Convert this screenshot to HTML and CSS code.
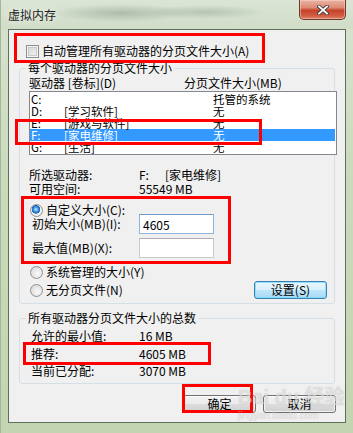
FILE: index.html
```html
<!DOCTYPE html>
<html lang="zh-CN">
<head>
  <meta charset="UTF-8">
  <meta name="viewport" content="width=device-width, initial-scale=1.0">
  <title>虚拟内存</title>
  <link rel="stylesheet" href="styles.css">
</head>
<body>

  <div class="window">
    <div class="titlebar">
      <span class="title">虚拟内存</span>
      <span class="close-btn">
        <svg width="12" height="10" viewBox="0 0 12 10">
          <path d="M2 1.5 L10 8.5 M10 1.5 L2 8.5" stroke="#3b3b3b" stroke-width="3.6" stroke-linecap="square"/>
          <path d="M2 1.5 L10 8.5 M10 1.5 L2 8.5" stroke="#ffffff" stroke-width="1.8" stroke-linecap="square"/>
        </svg>
      </span>
    </div>

    <div class="client">
      <div class="check-row">
        <span class="checkbox"></span>
        <span>自动管理所有驱动器的分页文件大小(A)</span>
      </div>

      <fieldset class="group">
        <legend>每个驱动器的分页文件大小</legend>
        <div class="group-body drives">
          <div class="list-head">
            <span class="head-drive">驱动器 [卷标](D)</span>
            <span>分页文件大小(MB)</span>
          </div>

          <div class="listbox">
            <div class="row"><span class="drive">C:</span><span class="vol"></span><span>托管的系统</span></div>
            <div class="row"><span class="drive">D:</span><span class="vol">[学习软件]</span><span>无</span></div>
            <div class="row"><span class="drive">E:</span><span class="vol">[游戏与软件]</span><span>无</span></div>
            <div class="row selected"><span class="drive">F:</span><span class="vol">[家电维修]</span><span>无</span></div>
            <div class="row"><span class="drive">G:</span><span class="vol">[生活]</span><span>无</span></div>
          </div>

          <div class="info">
            <div class="pair"><span class="key">所选驱动器:</span><span class="letter">F:</span><span>[家电维修]</span></div>
            <div class="pair"><span class="key">可用空间:</span><span>55549 MB</span></div>
          </div>

          <div class="radio-row custom"><span class="radio checked"></span>自定义大小(C):</div>
          <div class="field first">
            <label for="initSize">初始大小(MB)(I):</label>
            <input type="text" id="initSize" class="focused" value="4605">
          </div>
          <div class="field second">
            <label for="maxSize">最大值(MB)(X):</label>
            <input type="text" id="maxSize" value="">
          </div>
          <div class="radio-row system"><span class="radio"></span>系统管理的大小(Y)</div>
          <div class="last-row">
            <div class="radio-row"><span class="radio"></span>无分页文件(N)</div>
            <button type="button" class="btn btn-set">设置(S)</button>
          </div>
        </div>
      </fieldset>

      <fieldset class="group totals">
        <legend>所有驱动器分页文件大小的总数</legend>
        <div class="group-body">
          <div class="pair"><span class="key">允许的最小值:</span><span>16 MB</span></div>
          <div class="pair rec"><span class="key">推荐:</span><span>4605 MB</span></div>
          <div class="pair cur"><span class="key">当前已分配:</span><span>3070 MB</span></div>
        </div>
      </fieldset>

      <div class="buttons">
        <button type="button" class="btn">确定</button>
        <button type="button" class="btn">取消</button>
      </div>
    </div>

    <!-- red annotation boxes -->
    <div class="mark mark-1"></div>
    <div class="mark mark-2"></div>
    <div class="mark mark-3"></div>
    <div class="mark mark-4"></div>
    <div class="mark mark-5"></div>

    <div class="watermark">
      <span class="wm-big">Bai du 经验</span>
      <span class="wm-small">jingyan.baidu.com</span>
    </div>
  </div>

</body>
</html>
```

FILE: styles.css
```css
* {
  box-sizing: border-box;
}

body {
  margin: 0;
  font-family: "Noto Sans CJK SC", "Noto Sans", sans-serif;
  font-size: 12px;
  color: #000;
  background: #c6d7b7;
}

.window {
  position: relative;
  width: 353px;
  height: 433px;
  overflow: hidden;
  background: linear-gradient(to bottom, #d8e3d1 0%, #cadbbc 40%, #c2d4b1 100%);
  border-left: 1px solid #a5b79b;
}

/* title bar */
.titlebar {
  display: flex;
  justify-content: space-between;
  align-items: flex-start;
  height: 29px;
  padding: 0 7px 0 7px;
  background:
    radial-gradient(ellipse 70px 9px at 120px 13px, rgba(70, 90, 80, 0.28), transparent),
    radial-gradient(ellipse 60px 7px at 205px 12px, rgba(70, 90, 80, 0.22), transparent),
    linear-gradient(to bottom, #dbe5d5, #d0ddc7);
}

.title {
  margin-top: 8px;
  line-height: 14px;
  font-size: 12px;
  color: #1b1b1b;
  text-shadow: 0 0 6px rgba(255, 255, 255, 0.9);
}

.close-btn {
  display: flex;
  justify-content: center;
  align-items: center;
  width: 47px;
  height: 20px;
  border: 1px solid #6d3a30;
  border-top: none;
  border-radius: 0 0 5px 5px;
  background: linear-gradient(to bottom, #ebb5a6 0%, #dc8a73 40%, #c5432a 55%, #cf5a3f 80%, #dd8066 100%);
  box-shadow: inset 0 0 0 1px rgba(255, 220, 210, 0.45);
}

/* client area */
.client {
  height: 394px;
  margin: 0 7px;
  background: #f0f0f0;
  border: 1px solid #5f6f5a;
}

.check-row {
  display: flex;
  align-items: center;
  gap: 3px;
  height: 14px;
  margin-top: 14px;
  padding-left: 17px;
  line-height: 14px;
}

.checkbox {
  width: 13px;
  height: 13px;
  border: 1px solid #8e8f8f;
  background: linear-gradient(135deg, #d2d2d2, #f6f6f6);
  box-shadow: inset 0 0 0 1px #f4f4f4, inset 0 0 0 2px #c9c9c9;
}

/* group boxes */
.group {
  width: 316px;
  min-inline-size: 0;
  margin: 3px 0 0 10px;
  padding: 0;
  border: 1px solid #d5dfe5;
  border-radius: 3px;
}

.group legend {
  margin-left: 6px;
  padding: 0 2px;
  height: 14px;
  line-height: 14px;
}

.group-body {
  line-height: 14px;
}

.drives {
  padding: 1px 0 4px 9px;
}

.list-head {
  display: flex;
  height: 14px;
}

.head-drive {
  width: 155px;
}

.listbox {
  width: 308px;
  height: 64px;
  margin-top: 1px;
  padding: 1px 1px 1px 0;
  background: #fff;
  border: 1px solid #828790;
}

.row {
  display: flex;
  height: 12px;
  padding-left: 1px;
  font-size: 11.5px;
  line-height: 12px;
  white-space: nowrap;
}

.row.selected {
  background: #3399ff;
  color: #fff;
}

.drive {
  width: 33px;
}

.vol {
  width: 149px;
}

.info {
  margin-top: 13px;
}

.pair {
  display: flex;
  height: 14px;
}

.drives .key {
  width: 110px;
}

.letter {
  width: 26px;
}

.radio-row {
  display: flex;
  align-items: center;
  gap: 3px;
  height: 14px;
  padding-left: 1px;
}

.radio {
  width: 13px;
  height: 13px;
  border: 1px solid #8e8f8f;
  border-radius: 50%;
  background: radial-gradient(circle at 60% 60%, #fafafa 0%, #dedede 70%, #cfcfcf 100%);
}

.radio.checked {
  background:
    radial-gradient(circle at 45% 40%, #cfeeff 0px, #4aa3e8 2px, #1d5fb3 4px, transparent 4.5px),
    radial-gradient(circle, #ffffff 0%, #e6e6e6 100%);
}

.custom {
  margin-top: 7px;
}

.field {
  display: flex;
  align-items: center;
  height: 20px;
  padding-left: 3px;
}

.field.first {
  margin-top: -3px;
}

.field.second {
  margin-top: 4px;
}

.field label {
  width: 107px;
}

.field input {
  width: 75px;
  height: 20px;
  padding: 0 3px;
  border: 1px solid #c9cbd0;
  border-top-color: #abadb3;
  font-family: inherit;
  font-size: 12px;
  background: #fff;
}

.field input.focused {
  border-color: #8cb4de;
  border-top-color: #6e9ccb;
}

.system {
  margin-top: 7px;
}

.last-row {
  display: flex;
  justify-content: space-between;
  align-items: center;
  height: 18px;
  margin-top: 2px;
  padding-right: 7px;
}

/* buttons */
.btn {
  width: 73px;
  height: 18px;
  padding: 0;
  font-family: inherit;
  font-size: 12px;
  line-height: 16px;
  color: #000;
  border: 1px solid #707070;
  border-radius: 3px;
  background: linear-gradient(to bottom, #f2f2f2 0%, #ebebeb 50%, #dddddd 51%, #cfcfcf 100%);
  box-shadow: inset 0 0 0 1px rgba(255, 255, 255, 0.75);
}

.btn-set {
  border-color: #3c7fb1;
  background: linear-gradient(to bottom, #eaf6fd 0%, #d9f0fc 50%, #bee6fd 51%, #a7d9f5 100%);
  box-shadow: inset 0 0 0 1px rgba(120, 220, 255, 0.8);
}

.totals {
  margin-top: 7px;
}

.totals .group-body {
  padding: 4px 0 5px 11px;
}

.totals .key {
  width: 108px;
}

.totals .rec {
  margin-top: 4px;
}

.totals .cur {
  margin-top: 3px;
}

.buttons {
  display: flex;
  justify-content: flex-end;
  gap: 7px;
  margin-top: 11px;
  padding-right: 9px;
}

/* red annotation overlays */
.mark {
  position: absolute;
  border: 3px solid #ff0000;
}

.mark-1 { left: 13px; top: 33px; width: 251px; height: 30px; }
.mark-2 { left: 14px; top: 119px; width: 247px; height: 26px; }
.mark-3 { left: 20px; top: 196px; width: 210px; height: 68px; }
.mark-4 { left: 22px; top: 342px; width: 188px; height: 23px; }
.mark-5 { left: 181px; top: 384px; width: 71px; height: 29px; }

/* faint site watermark */
.watermark {
  position: absolute;
  left: 237px;
  top: 385px;
  display: flex;
  flex-direction: column;
  align-items: flex-start;
  color: rgba(255, 255, 255, 0.5);
  text-shadow: 0 0 1px rgba(110, 110, 110, 0.4);
  white-space: nowrap;
  pointer-events: none;
}

.wm-big {
  height: 25px;
  font-family: "Liberation Sans", "Noto Sans CJK SC", sans-serif;
  font-size: 20px;
  font-weight: bold;
  line-height: 25px;
}

.wm-small {
  height: 12px;
  font-family: "Liberation Sans", sans-serif;
  font-size: 10px;
  line-height: 12px;
}
```
